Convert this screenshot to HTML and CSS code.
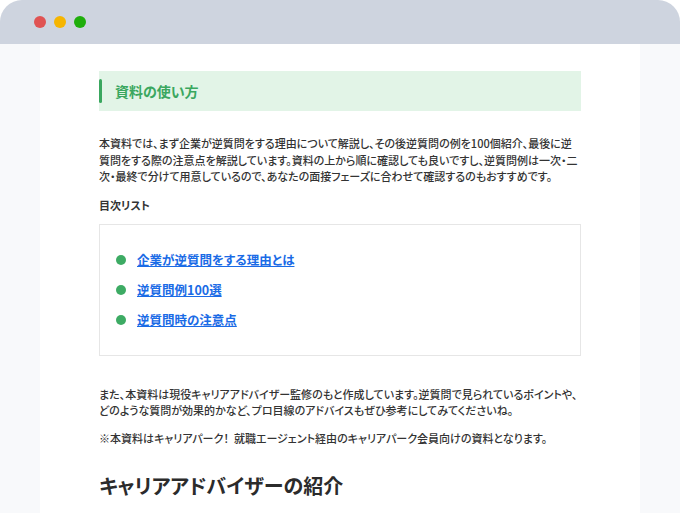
FILE: index.html
```html
<!DOCTYPE html>
<html lang="ja">
<head>
	<meta charset="utf-8">
	<title>資料の使い方</title>
	<link rel="stylesheet" href="styles.css">
</head>
<body>
	<div class="window">
		<header class="bar">
			<span class="dot red"></span>
			<span class="dot yellow"></span>
			<span class="dot green"></span>
		</header>
		<div class="page">
			<main class="sheet">
				<h2 class="box-title">資料の使い方</h2>
				<p class="lead">本資料では、まず企業が逆質問をする理由について解説し、その後逆質問の例を100個紹介、最後に逆質問をする際の注意点を解説しています。資料の上から順に確認しても良いですし、逆質問例は一次・二次・最終で分けて用意しているので、あなたの面接フェーズに合わせて確認するのもおすすめです。</p>
				<p class="toc-label">目次リスト</p>
				<ul class="toc">
					<li><a href="#reason">企業が逆質問をする理由とは</a></li>
					<li><a href="#list">逆質問例100選</a></li>
					<li><a href="#notes">逆質問時の注意点</a></li>
				</ul>
				<p class="text">また、本資料は現役キャリアアドバイザー監修のもと作成しています。逆質問で見られているポイントや、どのような質問が効果的かなど、プロ目線のアドバイスもぜひ参考にしてみてくださいね。</p>
				<p class="note">※本資料はキャリアパーク！<span class="wide">就職エージェント経由のキャリアパーク会員向けの資料となります。</span></p>
				<h1 class="section-title">キャリアアドバイザーの紹介</h1>
			</main>
		</div>
	</div>
</body>
</html>
```

FILE: styles.css
```css
body{
	margin:0;
	padding:0;
	background-color: white;
	font-family: "Noto Sans CJK JP", "Noto Sans", sans-serif;
	font-feature-settings: "palt";
	color: #333;
	overflow: hidden;
}
.window{
	height: 513px;
	display: flex;
	flex-direction: column;
}
.bar{
	height: 44px;
	flex-shrink: 0;
	background-color: #ced4df;
	border-radius: 22px 22px 0 0;
	display: flex;
	align-items: center;
	gap: 8px;
	padding-left: 34px;
	box-sizing: border-box;
}
.dot{
	width: 12px;
	height: 12px;
	border-radius: 50%;
}
.red{ background-color: #e05353; }
.yellow{ background-color: #f6b500; }
.green{ background-color: #1fae0b; }
.page{
	flex: 1;
	background-color: #f8f9fb;
}
.sheet{
	width: 600px;
	height: 100%;
	margin: 0 auto;
	background-color: white;
	padding: 27px 59px 0;
	box-sizing: border-box;
}
.box-title{
	margin: 0;
	height: 40px;
	display: flex;
	align-items: center;
	background-color: #e2f4e7;
	color: #3aa75f;
	font-size: 14px;
	font-weight: bold;
	padding-left: 16px;
	position: relative;
}
.box-title::before{
	content: "";
	position: absolute;
	left: 0;
	top: 8px;
	width: 3px;
	height: 24px;
	border-radius: 2px;
	background-color: #3aa75f;
}
.lead, .text, .note{
	font-size: 11px;
	line-height: 16.5px;
	margin: 0;
	font-weight: 500;
}
.lead{
	margin-top: 24px;
}
.toc-label{
	margin: 12px 0 10px;
	font-size: 11px;
	line-height: 17px;
	font-weight: bold;
}
.toc{
	list-style: none;
	margin: 0;
	padding: 26px 16px 26px;
	border: 1px solid #e6e6e6;
	display: flex;
	flex-direction: column;
	gap: 12px;
}
.toc li{
	display: flex;
	align-items: center;
	gap: 11px;
	line-height: 18px;
}
.toc li::before{
	content: "";
	width: 10px;
	height: 10px;
	border-radius: 50%;
	background-color: #3dab64;
}
.toc a{
	color: #1a6be6;
	font-size: 12.5px;
	font-weight: bold;
	text-decoration: underline;
}
.text{
	margin-top: 30px;
}
.note{
	margin-top: 11px;
}
.wide{
	margin-left: 5px;
}
.section-title{
	margin: 26px 0 0;
	font-size: 20px;
	line-height: 28px;
	font-weight: bold;
	color: #2b2b2b;
}
```
